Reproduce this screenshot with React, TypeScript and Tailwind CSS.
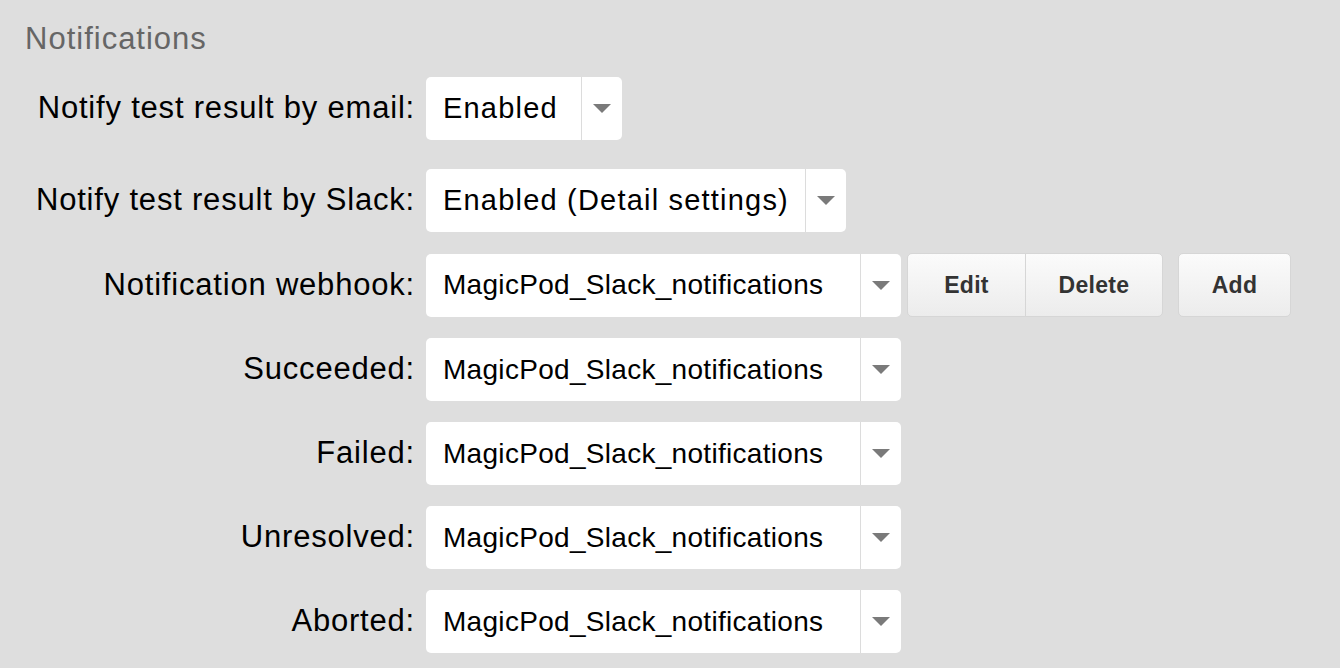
import React from 'react';

const WEBHOOK = 'MagicPod_Slack_notifications';

function Arrow() {
  return (
    <svg width="18" height="9" viewBox="0 0 18 9" className="block">
      <path d="M0 0 H18 L9 9 Z" fill="#7a7a7a" />
    </svg>
  );
}

function Select({ value, width, wide = false }: { value: string; width: string; wide?: boolean }) {
  return (
    <div className={`flex h-[63px] items-stretch rounded-[5px] bg-white ${width}`}>
      <div
        className={`flex flex-1 items-center whitespace-nowrap pl-[17px] text-black ${
          wide ? 'text-[29px] tracking-[1.2px]' : 'text-[28px] tracking-[0.3px]'
        }`}
      >
        {value}
      </div>
      <div className="flex w-[41px] items-center justify-center border-l border-[#dcdcdc]">
        <Arrow />
      </div>
    </div>
  );
}

function Row({ label, children, className = '' }: { label: string; children: React.ReactNode; className?: string }) {
  return (
    <div className={`flex items-center ${className}`}>
      <div className="w-[415px] whitespace-nowrap text-right text-[31px] tracking-[0.8px] text-black">{label}</div>
      <div className="ml-[11px] flex items-center">{children}</div>
    </div>
  );
}

const btn =
  'flex h-[64px] items-center justify-center bg-gradient-to-b from-[#fbfbfb] to-[#ececec] text-[23px] tracking-[0.3px] font-bold text-[#333] border border-[#d6d6d6]';

export default function App() {
  return (
    <div
      className="h-[668px] w-[1340px] overflow-hidden bg-[#dedede]"
      style={{ fontFamily: '"Liberation Sans", Arial, sans-serif' }}
    >
      <div className="pl-[25px] pt-[20px] text-[31px] leading-[38px] tracking-[1px] text-[#666]">Notifications</div>

      <Row label="Notify test result by email:" className="mt-[19px]">
        <Select value="Enabled" width="w-[196px]" wide />
      </Row>

      <Row label="Notify test result by Slack:" className="mt-[29px]">
        <Select value="Enabled (Detail settings)" width="w-[420px]" wide />
      </Row>

      <Row label="Notification webhook:" className="mt-[21px]">
        <Select value={WEBHOOK} width="w-[475px]" />
        <div className="ml-[6px] flex">
          <button className={`${btn} w-[119px] rounded-l-[5px]`}>Edit</button>
          <button className={`${btn} -ml-px w-[138px] rounded-r-[5px]`}>Delete</button>
        </div>
        <button className={`${btn} ml-[15px] w-[113px] rounded-[5px]`}>Add</button>
      </Row>

      {['Succeeded:', 'Failed:', 'Unresolved:', 'Aborted:'].map((l) => (
        <Row key={l} label={l} className="mt-[21px]">
          <Select value={WEBHOOK} width="w-[475px]" />
        </Row>
      ))}
    </div>
  );
}
